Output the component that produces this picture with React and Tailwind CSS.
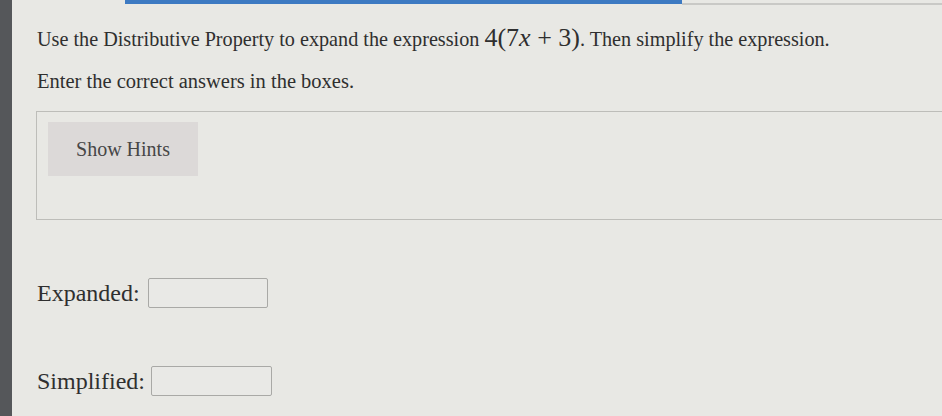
export default function App() {
  return (
    <div className="flex h-[416px] w-[942px] overflow-hidden bg-[#e8e8e4] text-[#2f2f2f]" style={{ fontFamily: '"Liberation Serif", "DejaVu Serif", serif' }}>
      <div className="w-[12px] shrink-0 bg-[#55575a]" />
      <div className="relative flex-1">
        <div className="absolute left-[113px] top-0 h-[4px] w-[557px] bg-[#3d7ac2]" />
        <div className="absolute left-[670px] top-[3px] h-[2px] w-[260px] bg-[#c9c9c6]" />
        <div className="pl-[25px] pt-[24px]">
          <p className="flex items-baseline text-[20.2px] leading-[28px]">
            <span>Use the Distributive Property to expand the expression&nbsp;</span>
            <span className="text-[26px]">4(7<i>x</i> + 3)</span>
            <span>. Then simplify the expression.</span>
          </p>
          <p className="mt-[14px] text-[20.5px] leading-[28px]">Enter the correct answers in the boxes.</p>
        </div>
        <div className="ml-[24px] mt-[16px] h-[109px] border border-r-0 border-[#bdbdb9] pl-[11px] pt-[10px]">
          <button className="h-[54px] w-[150px] bg-[#dcd9d8] text-[20px] text-[#464646]">Show Hints</button>
        </div>
        <div className="mt-[55px] flex items-center pl-[25px]">
          <span className="text-[24px]">Expanded:</span>
          <div className="ml-[8px] h-[30px] w-[120px] rounded-[2px] border border-[#a9a9a6] bg-[#e9e9e6]" />
        </div>
        <div className="mt-[52px] flex items-center pl-[25px]">
          <span className="text-[24px]">Simplified:</span>
          <div className="ml-[6px] h-[30px] w-[121px] rounded-[2px] border border-[#a9a9a6] bg-[#e9e9e6]" />
        </div>
      </div>
    </div>
  );
}
